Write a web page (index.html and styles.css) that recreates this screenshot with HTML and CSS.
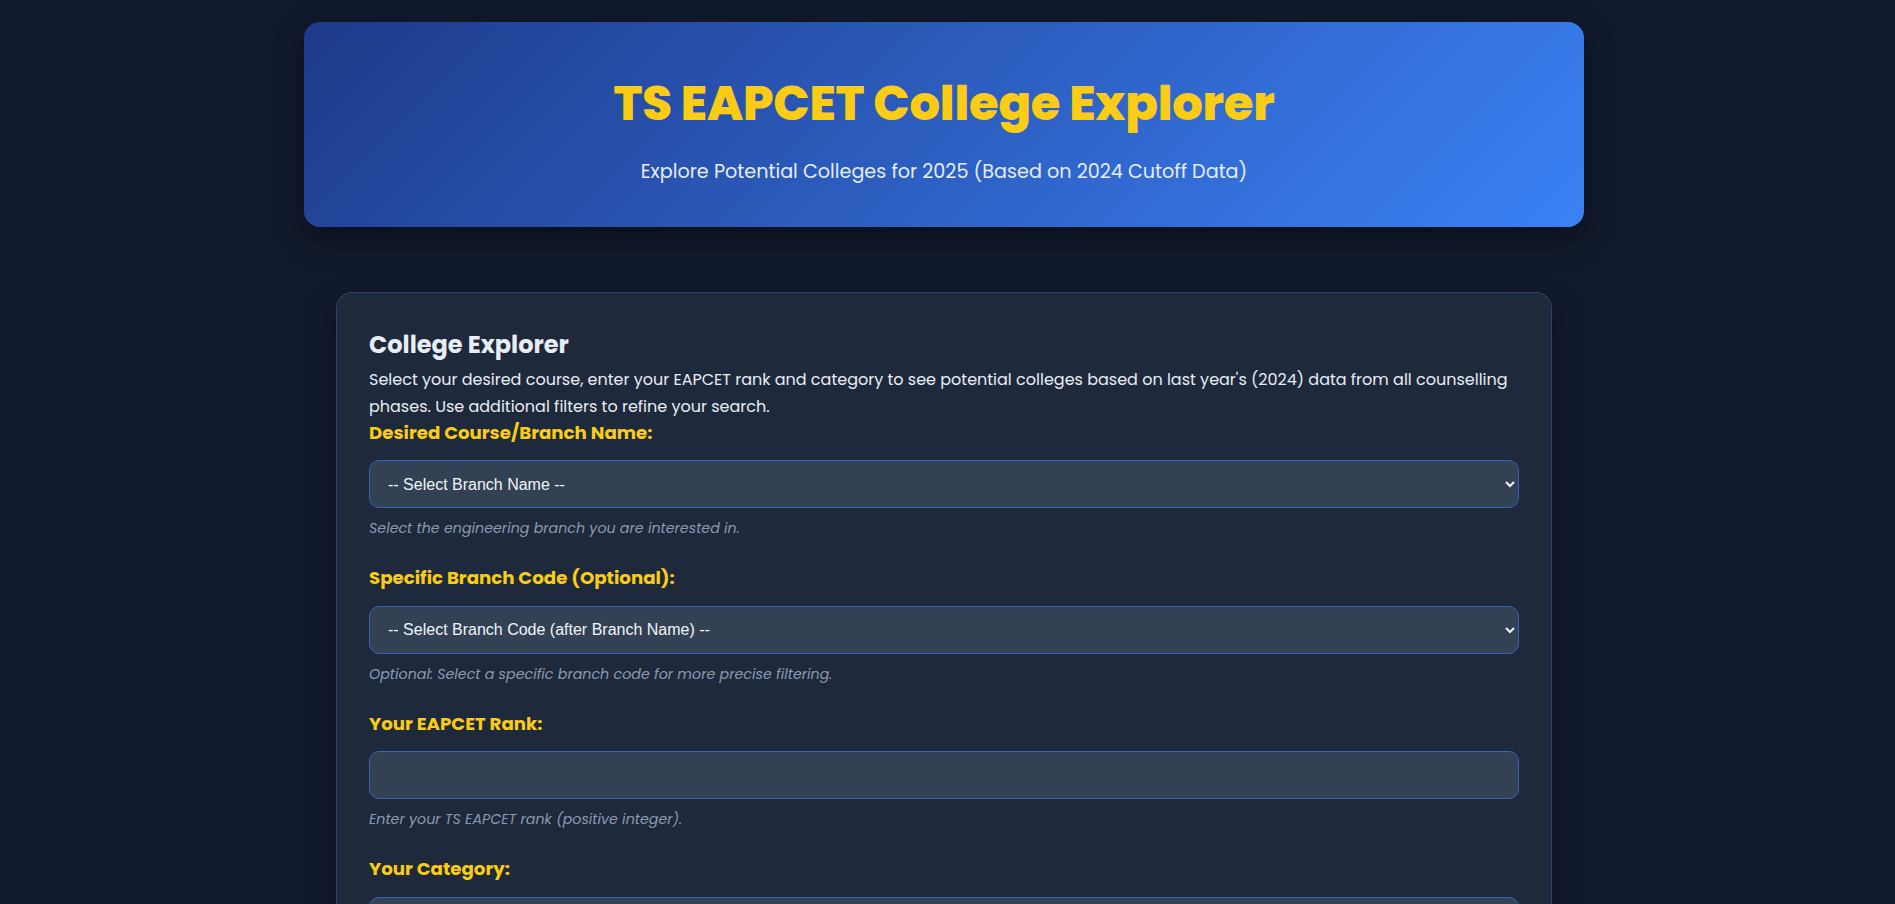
FILE: index.html
```html
<!DOCTYPE html>
<html lang="en">
<head>
<meta charset="utf-8">
<title>TS EAPCET College Explorer</title>
<link rel="stylesheet" href="styles.css">
</head>
<body>
<div class="container">
  <header class="hero">
    <h1 class="hero-title">TS EAPCET College Explorer</h1>
    <p class="hero-sub">Explore Potential Colleges for 2025 (Based on 2024 Cutoff Data)</p>
  </header>

  <section class="card">
    <h2 class="card-title">College Explorer</h2>
    <p class="card-desc">Select your desired course, enter your EAPCET rank and category to see potential colleges based on last year's (2024) data from all counselling phases. Use additional filters to refine your search.</p>

    <div class="field">
      <label class="field-label" for="branch">Desired Course/Branch Name:</label>
      <select id="branch" class="control">
        <option>-- Select Branch Name --</option>
      </select>
      <p class="hint">Select the engineering branch you are interested in.</p>
    </div>

    <div class="field">
      <label class="field-label" for="code">Specific Branch Code (Optional):</label>
      <select id="code" class="control">
        <option>-- Select Branch Code (after Branch Name) --</option>
      </select>
      <p class="hint">Optional: Select a specific branch code for more precise filtering.</p>
    </div>

    <div class="field">
      <label class="field-label" for="rank">Your EAPCET Rank:</label>
      <input id="rank" class="control" type="text">
      <p class="hint">Enter your TS EAPCET rank (positive integer).</p>
    </div>

    <div class="field">
      <label class="field-label" for="cat">Your Category:</label>
      <select id="cat" class="control">
        <option>-- Select Category --</option>
      </select>
      <p class="hint">Select your reservation category.</p>
    </div>
  </section>
</div>
</body>
</html>
```

FILE: styles.css
```css
html, body {
  margin: 0;
  padding: 0;
}

body {
  background: #111a2d;
  color: #e2e8f0;
  font-family: "Poppins", "Inter", "Noto Sans", sans-serif;
  padding: 22px 7px 40px 0;
}

.container {
  max-width: 1280px;
  margin: 0 auto;
}

.hero {
  background: linear-gradient(135deg, #1e3a8a 0%, #3b82f6 100%);
  border-radius: 16px;
  box-shadow: 0 10px 30px rgba(0, 0, 0, 0.45);
  text-align: center;
  padding: 51px 24px 0;
  height: 205px;
  box-sizing: border-box;
}

.hero-title {
  margin: 0;
  color: #facc15;
  font-size: 48px;
  font-weight: 800;
  line-height: 62px;
  letter-spacing: -0.2px;
}

.hero-sub {
  margin: 22px 0 0;
  color: #e6ecf8;
  font-size: 19.2px;
  line-height: 29px;
}

.card {
  margin: 65px 32px 0;
  background: #1e293b;
  border: 1px solid rgba(59, 130, 246, 0.3);
  border-radius: 16px;
  box-shadow: 0 10px 30px rgba(0, 0, 0, 0.35);
  padding: 32px;
}

.card-title {
  margin: 2px 0 0;
  font-size: 24px;
  font-weight: 700;
  line-height: 36px;
  color: #e8edf5;
}

.card-desc {
  margin: 4px 0 0;
  font-size: 16px;
  line-height: 26.5px;
  color: #e8edf5;
}

.field {
  margin-bottom: 26px;
}

.field-label {
  display: block;
  color: #facc15;
  font-weight: 700;
  font-size: 18.2px;
  line-height: 26.4px;
  margin-bottom: 14px;
}

.control {
  display: block;
  width: 100%;
  box-sizing: border-box;
  height: 48px;
  padding: 0 12px 0 14px;
  background: #334155;
  color: #f1f5f9;
  border: 1px solid #3564b8;
  border-radius: 10px;
  font-family: "Liberation Sans", Arial, sans-serif;
  font-size: 16px;
}

.hint {
  margin: 10px 0 0;
  font-size: 14.25px;
  line-height: 21px;
  font-style: italic;
  color: #8c9ab0;
}
```
